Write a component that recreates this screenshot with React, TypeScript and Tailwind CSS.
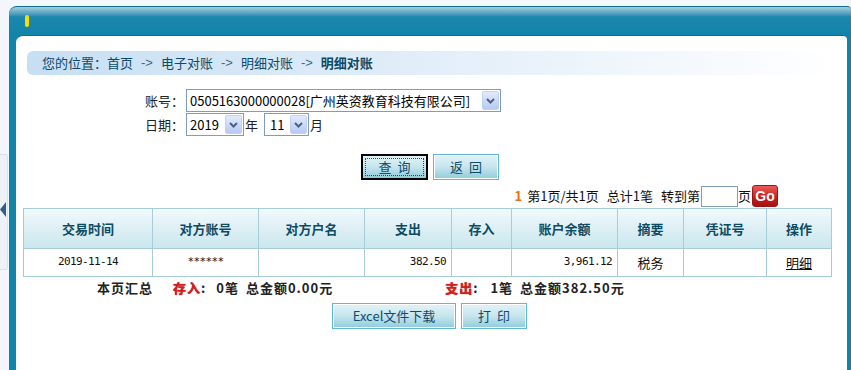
import React from "react";

const cjk = { fontFamily: '"Noto Sans CJK SC", "Noto Sans", sans-serif' };
const mono = { fontFamily: '"DejaVu Sans Mono", "Liberation Mono", monospace' };

function SelectBox({ w, text, textCls = "" }: { w: string; text: string; textCls?: string }) {
  return (
    <div className={`${w} h-[23px] border border-[#7f9db9] bg-white flex items-center justify-between pl-[3px] pr-[1px]`}>
      <span className={`text-[13px] leading-none text-black whitespace-nowrap ${textCls}`}>{text}</span>
      <div className="w-[17px] h-[19px] rounded-[2px] border border-[#c2d2f7] bg-gradient-to-b from-[#e2ebfe] to-[#b6c9f4] flex items-center justify-center">
        <svg width="9" height="6" viewBox="0 0 9 6">
          <path d="M1 1 L4.5 4.5 L8 1" stroke="#4d6185" strokeWidth="2" fill="none" />
        </svg>
      </div>
    </div>
  );
}

function Btn({ children, w, focus = false }: { children: React.ReactNode; w: string; focus?: boolean }) {
  return (
    <div
      className={`${w} h-[26px] flex items-center justify-center text-[13px] text-[#0b4d6b] bg-gradient-to-b from-[#e2f2f7] via-[#c6e5ee] to-[#8ecbdb] ${
        focus
          ? "border-2 border-black outline-1 outline-dotted outline-[#444] outline-offset-[-5px]"
          : "border border-[#63b6cf] shadow-[inset_0_0_0_1px_#ffffff]"
      }`}
    >
      {children}
    </div>
  );
}

const cols = [129, 106, 106, 87, 60, 106, 66, 83, 65];
const heads = ["交易时间", "对方账号", "对方户名", "支出", "存入", "账户余额", "摘要", "凭证号", "操作"];

export default function App() {
  return (
    <div className="w-[851px] h-[370px] overflow-hidden bg-[#f3f6fb] flex" style={cjk}>
      {/* left strip */}
      <div className="w-[9px] shrink-0 pt-[154px]">
        <div className="w-[8px] h-[116px] rounded-r-[3px] border border-l-0 border-[#d8e1ee] bg-[#edf2f9] flex items-start pt-[47px]">
          <svg width="6" height="15" viewBox="0 0 6 15">
            <path d="M6 0 L0 7.5 L6 15 Z" fill="#335f86" />
          </svg>
        </div>
      </div>

      {/* frame */}
      <div className="flex-1 mt-[6px] flex flex-col rounded-tl-[8px] rounded-tr-[4px] bg-[#1283a9] border-t border-[#0d6f90] overflow-hidden">
        {/* top bar */}
        <div className="h-[28px] shrink-0 bg-gradient-to-b from-[#a6cfdf] via-[#1b88ad] via-35% to-[#1283a9] flex items-center pl-[16px]">
          <div className="w-[4px] h-[12px] rounded-full bg-[#f8e000]" />
        </div>
        <div className="flex-1 flex pl-[7px] pr-[4px]">
          <div className="flex-1 bg-white rounded-tl-[7px] rounded-tr-[4px] border-t border-[#0e6d8d] flex flex-col">
            {/* breadcrumb */}
            <div className="mt-[15px] ml-[11px] w-[810px] h-[24px] rounded-[6px] bg-gradient-to-r from-[#c7dff3] via-[#e2eef9] to-white flex items-center pl-[15px] text-[13px] text-[#0b4a68] whitespace-nowrap">
              <span>您的位置：首页</span>
              <span className="text-[#3d6a80] mx-[8px]" style={{ fontFamily: '"Liberation Sans", sans-serif' }}>-&gt;</span>
              <span>电子对账</span>
              <span className="text-[#3d6a80] mx-[8px]" style={{ fontFamily: '"Liberation Sans", sans-serif' }}>-&gt;</span>
              <span>明细对账</span>
              <span className="text-[#3d6a80] mx-[8px]" style={{ fontFamily: '"Liberation Sans", sans-serif' }}>-&gt;</span>
              <span className="font-bold">明细对账</span>
            </div>

            {/* form */}
            <div className="ml-[129px] mt-[14px] flex flex-col gap-[1px] text-[13px] text-[#222]">
              <div className="flex items-center">
                <span className="w-[41px]">账号：</span>
                <SelectBox w="w-[315px]" text="0505163000000028[广州英资教育科技有限公司]" />
              </div>
              <div className="flex items-center">
                <span className="w-[41px]">日期：</span>
                <SelectBox w="w-[58px]" text="2019" />
                <span className="w-[20px] pl-[1px]">年</span>
                <SelectBox w="w-[45px]" text="11" textCls="pl-[2px]" />
                <span className="pl-[1px]">月</span>
              </div>
            </div>

            {/* buttons */}
            <div className="ml-[345px] mt-[18px] flex gap-[5px]">
              <Btn w="w-[67px]" focus>
                <span className="tracking-[6px] pl-[6px]">查询</span>
              </Btn>
              <Btn w="w-[66px]">
                <span className="tracking-[6px] pl-[6px]">返回</span>
              </Btn>
            </div>

            {/* pagination */}
            <div className="mt-[4px] w-[762px] flex justify-end items-center text-[13px] text-[#111] whitespace-nowrap h-[24px]">
              <span className="text-[#f26b0f] font-bold mr-[5px]">1</span>
              <span>第1页/共1页</span>
              <span className="ml-[8px]">总计1笔</span>
              <span className="ml-[8px]">转到第</span>
              <div className="w-[37px] h-[21px] border border-[#7f9db9] bg-white ml-[1px]" />
              <span>页</span>
              <div
                className="ml-[1px] w-[26px] h-[22px] rounded-[3px] border border-[#9c1515] bg-gradient-to-b from-[#ea5a5a] via-[#cc2020] to-[#a81212] flex items-center justify-center text-white font-bold text-[14px] leading-none"
                style={{ fontFamily: '"Liberation Sans", sans-serif' }}
              >
                Go
              </div>
            </div>

            {/* table */}
            <table className="ml-[7px] w-[808px] table-fixed border-collapse border border-[#a6cdd9]">
              <colgroup>
                {cols.map((c, i) => (
                  <col key={i} style={{ width: c }} />
                ))}
              </colgroup>
              <thead>
                <tr className="h-[40px] bg-gradient-to-b from-[#f1f9fb] to-[#c9e6ee]">
                  {heads.map((h) => (
                    <th key={h} className="border border-[#a6cdd9] text-[13px] font-bold text-[#0d4b63] text-center">
                      {h}
                    </th>
                  ))}
                </tr>
              </thead>
              <tbody>
                <tr className="h-[28px] text-[#111]">
                  <td className="border border-[#a6cdd9] text-center text-[11px] tracking-[-0.6px]" style={mono}>2019-11-14</td>
                  <td className="border border-[#a6cdd9] text-center text-[11px] tracking-[-0.6px]" style={mono}>******</td>
                  <td className="border border-[#a6cdd9]" />
                  <td className="border border-[#a6cdd9] text-right pr-[5px] text-[11px] tracking-[-0.6px]" style={mono}>382.50</td>
                  <td className="border border-[#a6cdd9]" />
                  <td className="border border-[#a6cdd9] text-right pr-[5px] text-[11px] tracking-[-0.6px]" style={mono}>3,961.12</td>
                  <td className="border border-[#a6cdd9] text-center text-[13px]">税务</td>
                  <td className="border border-[#a6cdd9]" />
                  <td className="border border-[#a6cdd9] text-center text-[13px] underline">明细</td>
                </tr>
              </tbody>
            </table>

            {/* summary */}
            <div className="h-[20px] mt-[1px] flex items-center text-[13px] font-bold text-[#222] whitespace-nowrap tracking-[1px]">
              <span className="ml-[81px]">本页汇总</span>
              <span className="ml-[20px] text-[#dc1c1c] [text-shadow:0_0_1px_#8a0000]">存入</span>
              <span className="text-[#14145a]">:</span>
              <span className="ml-[10px]">0笔</span>
              <span className="ml-[7px]">总金额0.00元</span>
              <span className="ml-[112px] text-[#dc1c1c] [text-shadow:0_0_1px_#8a0000]">支出</span>
              <span className="text-[#14145a]">:</span>
              <span className="ml-[12px]">1笔</span>
              <span className="ml-[7px]">总金额382.50元</span>
            </div>

            {/* bottom buttons */}
            <div className="ml-[316px] mt-[5px] flex gap-[5px]">
              <Btn w="w-[124px]">Excel文件下载</Btn>
              <Btn w="w-[66px]">
                <span className="tracking-[6px] pl-[6px]">打印</span>
              </Btn>
            </div>
          </div>
        </div>
      </div>
    </div>
  );
}
